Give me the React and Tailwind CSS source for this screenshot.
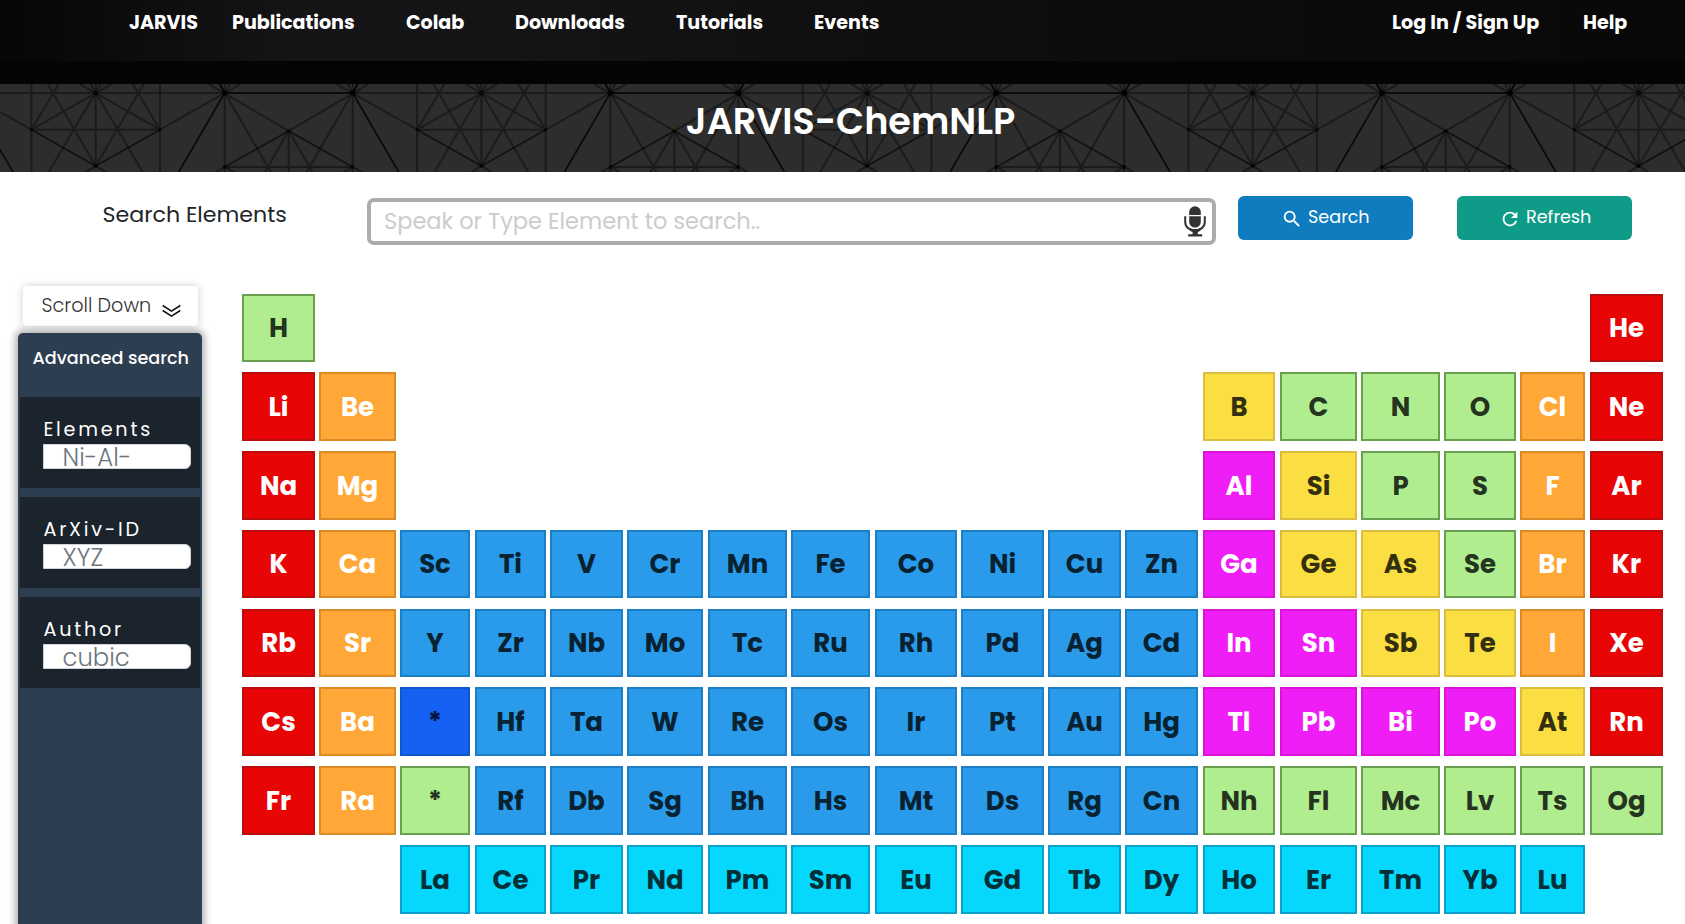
import React from "react";
import { MdSearch, MdRefresh } from "react-icons/md";

const KINDS = {
  g: "bg-[#afed8f] border-[#69a050] text-[#25331f]",
  r: "bg-[#e80505] border-[#b80e0e] text-white",
  o: "bg-[#ffa838] border-[#d98c25] text-white",
  b: "bg-[#299bea] border-[#1c7fc3] text-[#082231]",
  y: "bg-[#fbde42] border-[#d8bd40] text-[#34300e]",
  m: "bg-[#f01ef6] border-[#d914d6] text-white",
  c: "bg-[#05d7fd] border-[#0aa2cd] text-[#032f38]",
  d: "bg-[#1660f4] border-[#1257c6] text-[#06143a]",
};

const ROWS = [
  "H:g . . . . . . . . . . . . . . . . He:r",
  "Li:r Be:o . . . . . . . . . . B:y C:g N:g O:g Cl:o Ne:r",
  "Na:r Mg:o . . . . . . . . . . Al:m Si:y P:g S:g F:o Ar:r",
  "K:r Ca:o Sc:b Ti:b V:b Cr:b Mn:b Fe:b Co:b Ni:b Cu:b Zn:b Ga:m Ge:y As:y Se:g Br:o Kr:r",
  "Rb:r Sr:o Y:b Zr:b Nb:b Mo:b Tc:b Ru:b Rh:b Pd:b Ag:b Cd:b In:m Sn:m Sb:y Te:y I:o Xe:r",
  "Cs:r Ba:o *:d Hf:b Ta:b W:b Re:b Os:b Ir:b Pt:b Au:b Hg:b Tl:m Pb:m Bi:m Po:m At:y Rn:r",
  "Fr:r Ra:o *:g Rf:b Db:b Sg:b Bh:b Hs:b Mt:b Ds:b Rg:b Cn:b Nh:g Fl:g Mc:g Lv:g Ts:g Og:g",
  ". . La:c Ce:c Pr:c Nd:c Pm:c Sm:c Eu:c Gd:c Tb:c Dy:c Ho:c Er:c Tm:c Yb:c Lu:c .",
].map((r) => r.split(" "));

const WIDE_GAP_COLS = [2, 5, 7, 11, 12, 16];
const SHORT_ROWS = [0, 3, 4];

function Cell({ item, row, col }) {
  if (item === ".") return <div />;
  const [symbol, kind] = item.split(":");
  const right = col === 17 ? "mr-0" : WIDE_GAP_COLS.includes(col) ? "mr-[5px]" : "mr-[4px]";
  const height = SHORT_ROWS.includes(row) ? "h-[68px]" : "h-[69px]";
  return (
    <button
      className={`flex items-center justify-center border-2 text-[26px] leading-none font-bold ${KINDS[kind]} ${right} ${height}`}
    >
      {symbol}
    </button>
  );
}

function PeriodicTable() {
  return (
    <div className="grid w-[1421px] grid-cols-[77px_81px_75px_75px_77px_81px_83px_84px_86px_87px_77px_78px_77px_81px_83px_76px_70px_73px] grid-rows-[78px_79px_79px_79px_78px_79px_79px_69px]">
      {ROWS.map((row, r) => row.map((item, c) => <Cell key={`${r}-${c}`} item={item} row={r} col={c} />))}
    </div>
  );
}

function Lattice() {
  const thin =
    "M-129 9H129M0 0V82M-64.3 0V88M64.3 0V88M-64.3 45.7H64.3" +
    "M-16 0L64.3 45.7M16 0L-64.3 45.7M-5 0L47 88M5 0L-47 88" +
    "M-48 0L0 82M48 0L0 82M-37 0L-64.3 45.7M37 0L64.3 45.7" +
    "M64.3 45.7L145 0M-64.3 45.7L-145 0M0 82L10 88M0 82L-10 88" +
    "M113 0L193 47L273 0M129 0V88M257 0V88M124 0L175 88M262 0L211 88M134 0L129 9M252 0L257 9" +
    "M193 47V88M193 47L169 88M193 47L217 88M129 83H257M129 83L120 88M257 83L266 88M129 83L138 88M257 83L248 88";
  const mid = "M-64.3 45.7L0 82L64.3 45.7M129 83L193 47L257 83";
  const thick = "M124 0L129 9H257L262 0M129 9L83 88M257 9L303 88";
  return (
    <svg className="absolute inset-0 h-full w-full" fill="none" aria-hidden="true">
      {[-1, 0, 1, 2, 3, 4].map((n) => (
        <g key={n} transform={`translate(${95.7 + n * 385.7} 0)`} stroke="#000">
          <path d={thin} strokeWidth="2.1" opacity="0.38" />
          <path d={mid} strokeWidth="1.7" opacity="0.62" />
          <path d={thick} strokeWidth="1.8" opacity="0.75" />
          <g fill="#000" stroke="none" opacity="0.7">
            <circle cx="0" cy="9" r="2.6" />
            <circle cx="129" cy="9" r="3" />
            <circle cx="257" cy="9" r="3" />
            <circle cx="0" cy="82" r="1.9" />
            <circle cx="193" cy="47" r="1.7" />
            <circle cx="-64.3" cy="45.7" r="1.7" />
            <circle cx="64.3" cy="45.7" r="1.7" />
            <circle cx="129" cy="83" r="1.9" />
            <circle cx="257" cy="83" r="1.9" />
          </g>
        </g>
      ))}
    </svg>
  );
}

function MicIcon() {
  return (
    <svg width="22" height="31" viewBox="0 0 22 31" fill="#333" aria-hidden="true">
      <path d="M5.2 9V5.8a5.8 5.5 0 0 1 11.6 0V9z" />
      <path d="M5.2 10.2h11.6V16a5.8 5.5 0 0 1-11.6 0z" />
      <path d="M1.2 10.3V16c0 5 4 8.2 9.8 8.2S20.8 21 20.8 16v-5.7" fill="none" stroke="#333" strokeWidth="2" />
      <path d="M2 17.5C3.500 24 7 25.500 8.600 26v2.200H4.200V30.500h14V28.200H13.800V26c1.500-.5 5-2 6.200-8.500-1 4-4.500 5.800-9 5.800s-8-1.800-9-5.800z" />
    </svg>
  );
}

function Field({ label, placeholder }) {
  return (
    <div className="mx-[2px] mb-[9px] h-[91px] bg-[#1b242d] pt-[22px] pl-[23px]">
      <label className="block h-[25px] pl-[0.5px] text-[19.2px] leading-[22px] tracking-[2.75px] text-white">{label}</label>
      <input
        placeholder={placeholder}
        className="block h-[25px] w-[148px] rounded-r-[6px] border border-[#ced4da] bg-white px-[18.5px] pt-px text-[24.3px] leading-[22px] font-light text-[#6c757d] placeholder:text-[#6c757d]"
      />
    </div>
  );
}

export default function App() {
  return (
    <div className="h-[924px] w-[1685px] overflow-hidden bg-white font-['Poppins','Inter',sans-serif]">
      <header className="h-[84px] bg-[#040404]">
        <nav className="flex h-[61px] items-start bg-[linear-gradient(90deg,#060606_0%,#151517_18%,#141416_32%,#0e0e0f_55%,#080808_100%)] pt-[9px] text-[19.1px] leading-[27px] font-bold whitespace-nowrap text-white">
          <a className="ml-[129px] w-[103px]">JARVIS</a>
          <a className="w-[174px]">Publications</a>
          <a className="w-[109px]">Colab</a>
          <a className="w-[161px]">Downloads</a>
          <a className="w-[138px]">Tutorials</a>
          <a className="w-[578px]">Events</a>
          <a className="w-[191px]">Log In / Sign Up</a>
          <a>Help</a>
        </nav>
      </header>

      <section className="relative flex h-[88px] items-center justify-center bg-[#2d2d2d]">
        <Lattice />
        <h1 className="relative pb-[13px] pl-[16px] text-[36.6px] leading-[50px] font-semibold text-white">JARVIS-ChemNLP</h1>
      </section>

      <section className="flex h-[114px] items-start pl-[102.5px]">
        <div className="mt-[27px] w-[264.5px] text-[22.15px] leading-[31px] text-[#212529]">Search Elements</div>
        <div className="mt-[26px] flex h-[47px] w-[849px] items-center rounded-[7px] border-4 border-[#abacaf] pr-[6.5px] pl-[13px]">
          <input
            placeholder="Speak or Type Element to search.."
            className="mb-px min-w-0 flex-1 text-[22.5px] leading-[30px] placeholder:text-[#cccccc]"
          />
          <MicIcon />
        </div>
        <button className="mt-[24px] ml-[22px] flex h-[44px] w-[175px] items-start rounded-[6px] bg-[#0e7cbf] pl-[43px] text-[17.6px] leading-[42px] text-white">
          <MdSearch className="mt-[12px] mr-[5px] size-[22px]" />
          Search
        </button>
        <button className="mt-[24px] ml-[44px] flex h-[44px] w-[175px] items-start rounded-[6px] bg-[#0e9b88] pl-[42px] text-[17.6px] leading-[42px] text-white">
          <MdRefresh className="mt-[12px] mr-[5px] size-[22px]" />
          Refresh
        </button>
      </section>

      <main className="flex items-start">
        <aside className="w-[242px] pl-[18px]">
          <div className="mb-[7px] ml-[5px] flex h-[40px] w-[175px] items-start rounded-[4px] bg-white pt-[6px] pl-[18.5px] text-[19.2px] leading-[28px] font-light text-[#333] shadow-[0_0_8px_rgba(0,0,0,0.2)]">
            <span className="w-[120px]">Scroll Down</span>
            <svg className="mt-[12px]" width="19" height="14" viewBox="0 0 19 14" fill="none" stroke="#111" strokeWidth="1.5" aria-hidden="true">
              <path d="M.7 1.500L9.500 7.200 18.300 1.500M.7 6.500L9.500 12.200 18.300 6.500" />
            </svg>
          </div>
          <div className="h-[600px] w-[184px] rounded-[5px] bg-[#2d3e50] shadow-[0_0_7px_3px_rgba(0,0,0,0.3)]">
            <h2 className="h-[64px] pt-[12px] pl-[14.5px] text-[17.6px] leading-[26px] font-medium whitespace-nowrap text-white">Advanced search</h2>
            <Field label="Elements" placeholder="Ni-Al-" />
            <Field label="ArXiv-ID" placeholder="XYZ" />
            <Field label="Author" placeholder="cubic" />
          </div>
        </aside>
        <div className="pt-[8px]">
          <PeriodicTable />
        </div>
      </main>
    </div>
  );
}
